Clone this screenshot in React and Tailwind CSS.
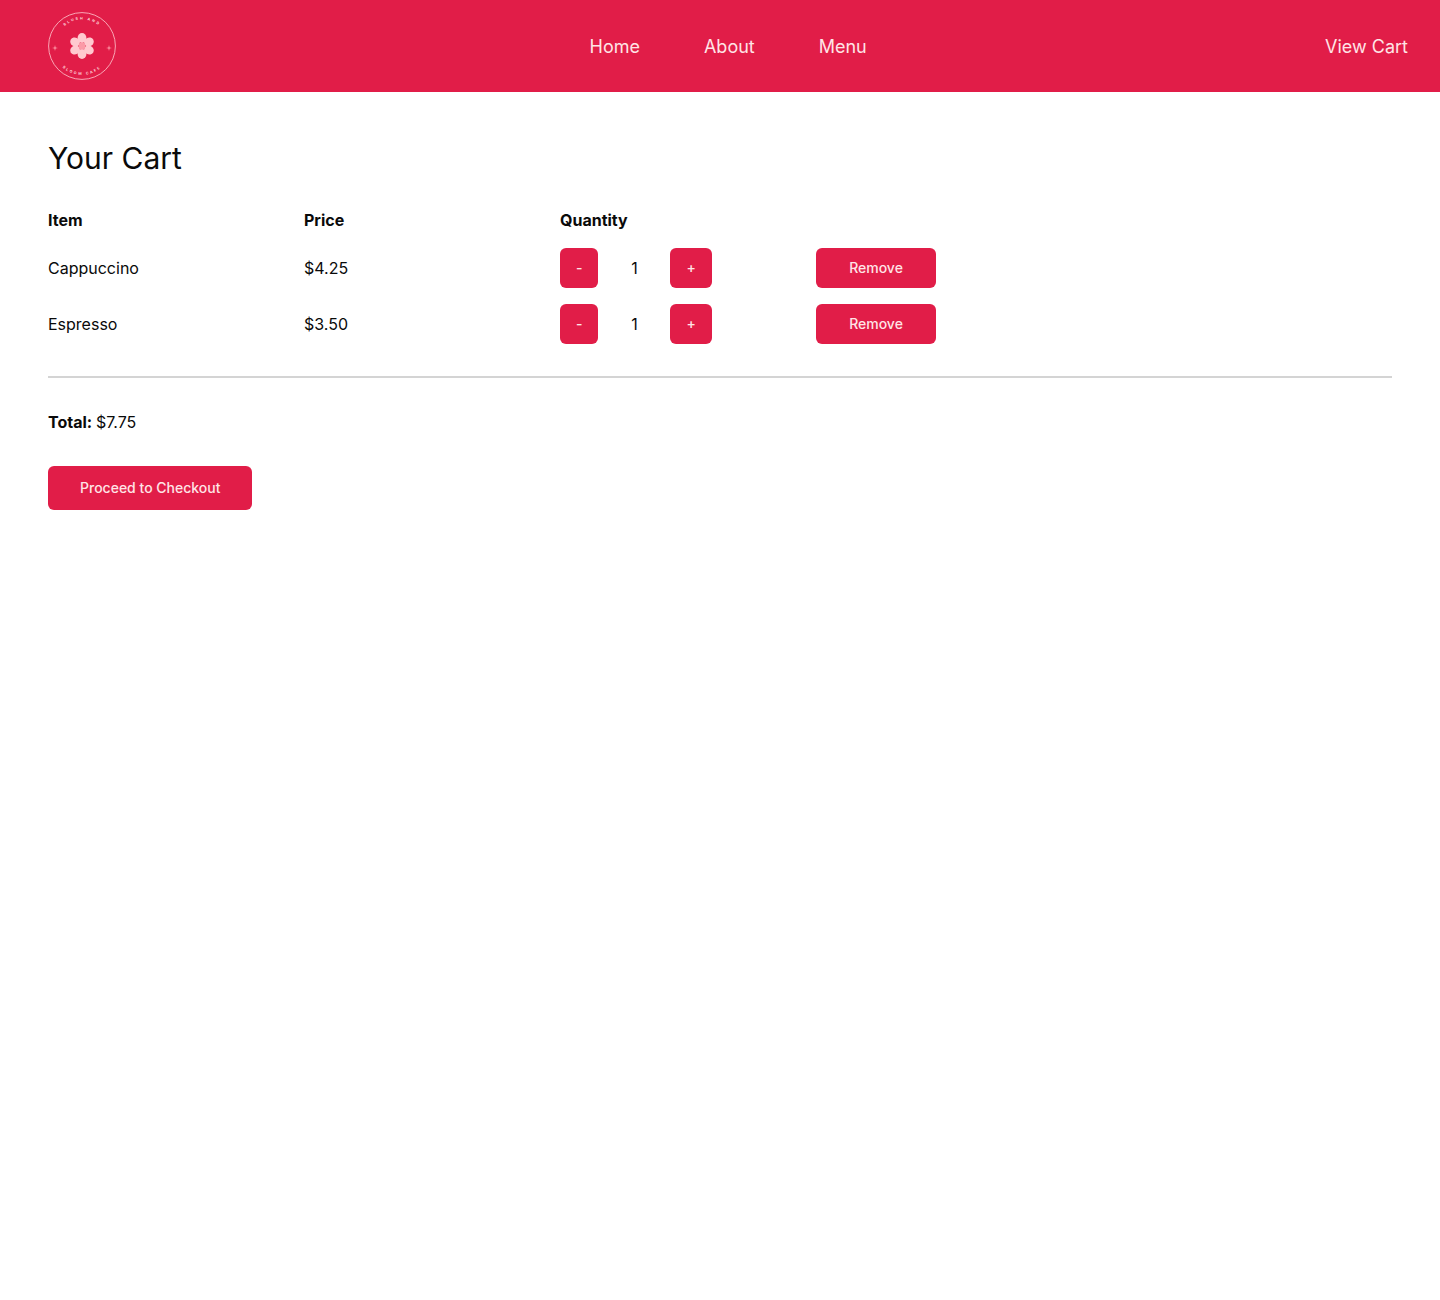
import React from 'react'

const items = [
  { name: 'Cappuccino', price: '$4.25', qty: 1 },
  { name: 'Espresso', price: '$3.50', qty: 1 },
]

const petals = [0, 60, 120, 180, 240, 300]

function Logo() {
  return (
    <svg viewBox="0 0 68 68" className="w-[68px] h-[68px] block" aria-label="Blush and Bloom Cafe">
      <defs>
        <path id="arcTop" d="M 7.5 34 A 26.5 26.5 0 0 1 60.5 34" />
        <path id="arcBottom" d="M 5 34 A 29 29 0 0 0 63 34" />
      </defs>
      <circle cx="34" cy="34" r="33.4" fill="none" stroke="#ffc9d0" strokeWidth="0.8" />
      <text fill="#ffd5da" fontSize="3.6" fontWeight="700" letterSpacing="1.9" textAnchor="middle" fontFamily="Inter, sans-serif">
        <textPath href="#arcTop" startOffset="50%">BLUSH AND</textPath>
      </text>
      <text fill="#ffd5da" fontSize="3.6" fontWeight="700" letterSpacing="1.9" textAnchor="middle" fontFamily="Inter, sans-serif">
        <textPath href="#arcBottom" startOffset="50%">BLOOM CAFE</textPath>
      </text>
      {petals.map((a) => (
        <ellipse key={a} cx="34" cy="26" rx="4.4" ry="5" fill="#ffc9cf" transform={`rotate(${a} 34 34)`} />
      ))}
      <circle cx="34" cy="34" r="3.4" fill="#fb9aa7" />
      <path d="M7 33 L7.6 35.4 L10 36 L7.6 36.6 L7 39 L6.4 36.6 L4 36 L6.4 35.4 Z" fill="#ff9aa8" />
      <path d="M61 33 L61.6 35.4 L64 36 L61.6 36.6 L61 39 L60.4 36.6 L58 36 L60.4 35.4 Z" fill="#ff9aa8" />
    </svg>
  )
}

function CartRow({ item }) {
  return (
    <div className="grid grid-cols-[256px_256px_256px_auto] items-center h-10 mb-4 text-base">
      <div>{item.name}</div>
      <div>{item.price}</div>
      <div className="flex items-center">
        <button className="h-10 px-4 rounded-md bg-[#e11d48] text-[#ffe4e6] text-sm font-medium">-</button>
        <span className="w-[72px] text-center">{item.qty}</span>
        <button className="h-10 px-4 rounded-md bg-[#e11d48] text-[#ffe4e6] text-sm font-medium">+</button>
      </div>
      <div>
        <button className="h-10 w-[120px] rounded-md bg-[#e11d48] text-[#ffe4e6] text-sm font-medium">Remove</button>
      </div>
    </div>
  )
}

export default function App() {
  return (
    <div className="min-h-[1300px] bg-white text-[#0a0a0a] font-['Inter',sans-serif]">
      {/* header */}
      <header className="relative h-[92px] bg-[#e11d48] text-[#ffe4e6] flex items-center justify-between pl-12 pr-8">
        <Logo />
        <nav className="absolute left-[589.5px] top-[34px] flex gap-16 text-lg leading-[26px]">
          <a>Home</a>
          <a>About</a>
          <a>Menu</a>
        </nav>
        <a className="text-lg leading-[26px] mt-0.5">View Cart</a>
      </header>

      <main className="px-12 pt-12">
        <h1 className="text-[30px] leading-9 mb-8">Your Cart</h1>

        <div className="grid grid-cols-[256px_256px_256px_auto] h-6 mb-4 font-bold text-base">
          <div>Item</div>
          <div>Price</div>
          <div>Quantity</div>
        </div>

        {items.map((item) => (
          <CartRow key={item.name} item={item} />
        ))}

        <hr className="mt-8 border-t-2 border-[#d4d4d4]" />

        <p className="mt-8 text-base leading-6">
          <strong className="font-bold mr-[-0.7px]">Total:</strong> $7.75
        </p>

        <button className="mt-8 h-11 px-8 rounded-md bg-[#e11d48] text-[#ffe4e6] text-sm font-medium">
          Proceed to Checkout
        </button>
      </main>
    </div>
  )
}
